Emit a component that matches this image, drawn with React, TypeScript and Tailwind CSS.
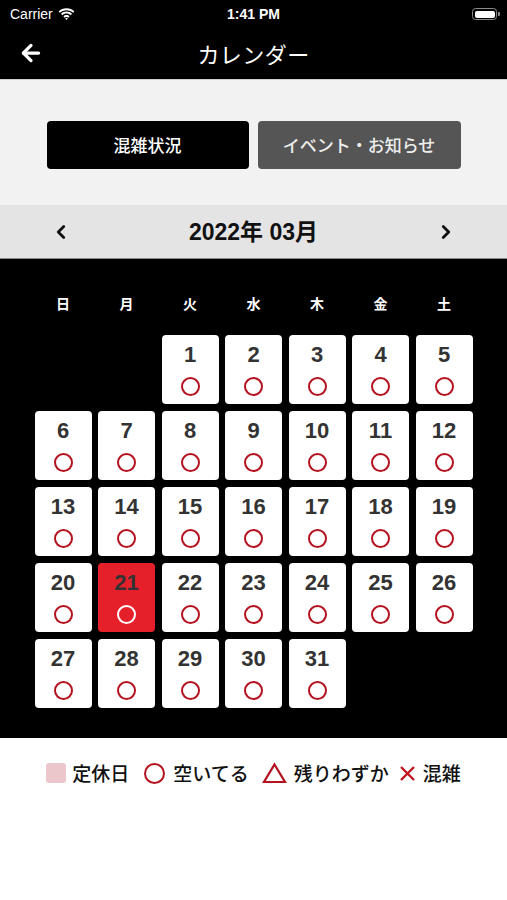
import { ArrowLeft, ChevronLeft, ChevronRight } from "lucide-react";

const JP = "font-['Noto_Sans_CJK_JP','Noto_Sans',sans-serif]";
const NUM = "font-['Liberation_Sans','Noto_Sans_CJK_JP',sans-serif]";

const WEEKDAYS = ["日", "月", "火", "水", "木", "金", "土"];
const TODAY = 21;
// March 2022 starts on a Tuesday
const LEADING_BLANKS = 2;

function StatusBar() {
  return (
    <div className="relative flex h-[28px] items-center justify-between bg-black pl-[10px] pr-[7px] text-white">
      <div className="flex items-center gap-[5px]">
        <span className={`${NUM} text-[14px]`}>Carrier</span>
        <svg width="17" height="12" viewBox="0 0 17 12" fill="white">
          <path d="M8.5 2.2c2.6 0 4.9 1 6.6 2.6l1.3-1.4C14.3 1.4 11.5.2 8.5.2S2.7 1.4.6 3.4l1.3 1.4C3.6 3.2 5.9 2.2 8.5 2.2z" />
          <path d="M8.5 5.6c1.6 0 3.1.6 4.2 1.6l1.3-1.4c-1.5-1.3-3.4-2.2-5.5-2.2S4.5 4.5 3 5.8l1.3 1.4c1.1-1 2.6-1.6 4.2-1.6z" />
          <path d="M8.5 9c.7 0 1.3.3 1.8.7L11.6 8.3C10.8 7.5 9.7 7 8.5 7s-2.3.5-3.1 1.3l1.3 1.4C7.2 9.3 7.8 9 8.5 9z" />
          <path d="M8.5 12l1.4-1.5c-.4-.3-.9-.5-1.4-.5s-1 .2-1.4.5L8.5 12z" />
        </svg>
      </div>
      <span className={`${NUM} absolute left-1/2 -translate-x-1/2 text-[14px] font-bold`}>1:41 PM</span>
      <div className="flex items-center">
        <div className="flex h-[12px] w-[25px] items-center rounded-[3.5px] border border-[#8a8a8a] p-[1.5px]">
          <div className="h-full w-full rounded-[2px] bg-white" />
        </div>
        <div className="ml-[1px] h-[4px] w-[2px] rounded-r-[1px] bg-[#8a8a8a]" />
      </div>
    </div>
  );
}

function NavBar() {
  return (
    <div className="relative flex h-[51px] items-center justify-center bg-black text-white">
      <ArrowLeft className="absolute left-[18px] top-[12px]" size={26} strokeWidth={3} />
      <span className={`${JP} text-[22px] font-normal tracking-[0.02em]`}>カレンダー</span>
    </div>
  );
}

function TabSwitch() {
  return (
    <div className="flex justify-center gap-[9px] border-t border-[#cfcfcf] bg-[#f2f2f2] pb-[36px] pt-[41px]">
      <button
        type="button"
        className={`${JP} h-[48px] w-[202px] rounded-[4px] bg-black text-[17px] font-medium text-white`}
      >
        混雑状況
      </button>
      <button
        type="button"
        className={`${JP} h-[48px] w-[203px] rounded-[4px] bg-[#555555] text-[17px] font-medium text-[#eeeeee]`}
      >
        イベント・お知らせ
      </button>
    </div>
  );
}

function MonthBar() {
  return (
    <div className="flex h-[54px] items-center justify-between border-b border-[#8c8c8c] bg-[#e4e4e4] px-[50px] text-[#111111]">
      <ChevronLeft size={22} strokeWidth={3} />
      <span className={`${NUM} text-[23px] font-bold`}>
        2022<span className={JP}>年</span> 03<span className={JP}>月</span>
      </span>
      <ChevronRight size={22} strokeWidth={3} />
    </div>
  );
}

function DayCell({ day }: { day: number }) {
  const isToday = day === TODAY;
  return (
    <div
      className={`flex h-[69px] flex-col items-center rounded-[4px] pt-[8px] ${
        isToday ? "bg-[#e6202b]" : "bg-white"
      }`}
    >
      <span className={`${NUM} h-[24px] text-[22px] font-bold leading-[24px] text-[#333333]`}>{day}</span>
      <span
        className={`mt-[10px] h-[19px] w-[19px] rounded-full border-2 ${
          isToday ? "border-white" : "border-[#b3121e]"
        }`}
      />
    </div>
  );
}

function Calendar() {
  const days = Array.from({ length: 31 }, (_, i) => i + 1);
  return (
    <div className="bg-black pb-[30px] pt-[32px]">
      <div className="mx-auto grid w-[438px] grid-cols-7 gap-x-[6.5px]">
        {WEEKDAYS.map((w) => (
          <span key={w} className={`${JP} h-[24px] text-center text-[14px] font-bold leading-[24px] text-white`}>
            {w}
          </span>
        ))}
      </div>
      <div className="mx-auto mt-[20px] grid w-[438px] grid-cols-7 gap-x-[6.5px] gap-y-[7px]">
        {Array.from({ length: LEADING_BLANKS }, (_, i) => (
          <div key={`blank-${i}`} />
        ))}
        {days.map((d) => (
          <DayCell key={d} day={d} />
        ))}
      </div>
    </div>
  );
}

function Legend() {
  return (
    <div className={`${JP} flex items-center justify-center pt-[21px] text-[19px] font-medium text-[#111111]`}>
      <span className="mr-[6px] h-[20px] w-[20px] rounded-[3px] bg-[#ebc6cb]" />
      <span>定休日</span>
      <span className="ml-[15px] mr-[8px] h-[21px] w-[21px] rounded-full border-2 border-[#b3121e]" />
      <span>空いてる</span>
      <svg className="ml-[13px] mr-[7px]" width="25" height="22" viewBox="0 0 25 22">
        <path d="M12.5 2.5 L23 20 H2 Z" fill="none" stroke="#b3121e" strokeWidth="2.2" strokeLinejoin="miter" />
      </svg>
      <span>残りわずか</span>
      <svg className="ml-[10px] mr-[7px]" width="17" height="17" viewBox="0 0 17 17">
        <path d="M2 2 L15 15 M15 2 L2 15" stroke="#c0141f" strokeWidth="2.4" />
      </svg>
      <span>混雑</span>
    </div>
  );
}

export default function App() {
  return (
    <div className="h-[900px] w-[507px] overflow-hidden bg-white">
      <StatusBar />
      <NavBar />
      <TabSwitch />
      <MonthBar />
      <Calendar />
      <Legend />
    </div>
  );
}
